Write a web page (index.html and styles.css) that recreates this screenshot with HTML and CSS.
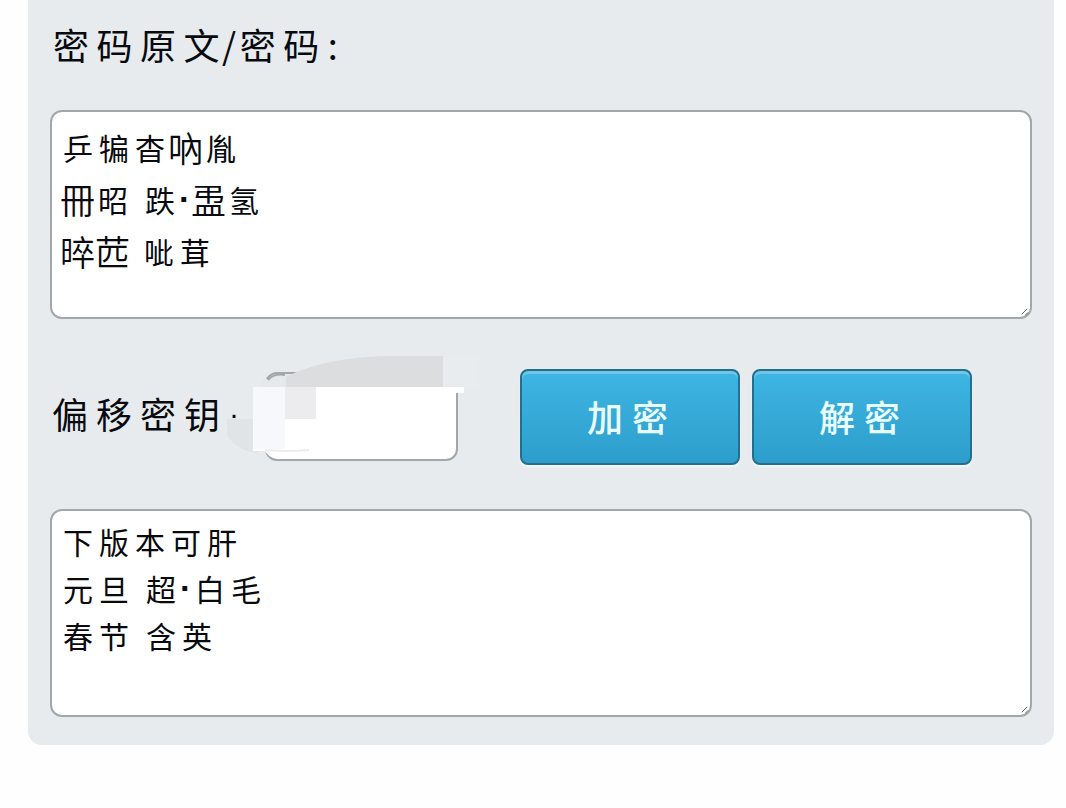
FILE: index.html
```html
<!DOCTYPE html>
<html lang="zh-CN">
<head>
    <meta charset="UTF-8">
    <meta name="viewport" content="width=device-width, initial-scale=1.0">
    <title>密码</title>
    <link rel="stylesheet" href="styles.css">
</head>
<body>
    <div class="panel">
        <div class="title">密码原文<span class="slash">/</span>密码<span class="colon">:</span></div>

        <div class="box source">
            <p><span class="hand">乒犏杳</span><span class="plain">吶</span><span class="hand">胤</span></p>
            <p><span class="plain">冊</span><span class="hand">昭</span><span class="space"></span><span class="hand">跌</span><span class="dot">·</span><span class="plain">盄</span><span class="hand">氢</span></p>
            <p><span class="plain">晬苉</span><span class="space"></span><span class="hand">呲茸</span></p>
            <svg class="grip" viewBox="0 0 10 10"><path d="M2 8L8 2M6 9L9 6"/></svg>
        </div>

        <div class="controls">
            <span class="label">偏移密钥<span class="label-dot">·</span></span>
            <div class="key">
                <div class="key-input"></div>
                <svg class="smudge" viewBox="0 0 260 110">
                    <path d="M2 66H32V100Q12 98 2 82Z" fill="#e0e4e6"/>
                    <path d="M36 26H43Q50 21 66 21V35H36Z" fill="#e5e9eb"/>
                    <path d="M43 27Q49 20 60 22" fill="none" stroke="#a3a7a9" stroke-width="2"/>
                    <path d="M61 24C90 9 130 3 168 3H218V36H61Z" fill="#dcddde"/>
                    <path d="M36 36H60V99H36Z" fill="#e7ebee"/>
                    <path d="M41 100V94H100V104H46Z" fill="#fff"/>
                    <path d="M28 34H239V40H226V42H218V90H100V98H28Z" fill="#fff"/>
                    <path d="M28 34H60V96H28Z" fill="#f7f8fc"/>
                    <path d="M60 34H91V66H60Z" fill="#ececef"/>
                    <path d="M40 97Q62 99 84 97" fill="none" stroke="#ececee" stroke-width="2"/>
                    <path d="M218 4H252V34H218Z" fill="#e9ecee"/>
                </svg>
            </div>
            <div class="buttons">
                <button class="btn">加密</button>
                <button class="btn">解密</button>
            </div>
        </div>

        <div class="box result">
            <p><span class="hand">下版本可肝</span></p>
            <p><span class="hand">元旦</span><span class="space"></span><span class="hand">超</span><span class="dot">·</span><span class="hand">白毛</span></p>
            <p><span class="hand">春节</span><span class="space"></span><span class="hand">含英</span></p>
            <svg class="grip" viewBox="0 0 10 10"><path d="M2 8L8 2M6 9L9 6"/></svg>
        </div>
    </div>
</body>
</html>
```

FILE: styles.css
```css
* {
    box-sizing: border-box;
}
body {
    margin: 0;
    height: 808px;
    overflow: hidden;
    background-color: #fefefe;
    color: #080a0e;
    font-family: "Noto Sans CJK SC", sans-serif;
}
.panel {
    width: 1026px;
    height: 745px;
    margin-left: 28px;
    padding: 15px 22px 28px;
    background-color: #e7ebee;
    border-radius: 0 0 14px 14px;
}
.title {
    height: 95px;
    padding-left: 3px;
    font-size: 36px;
    font-weight: 400;
    line-height: 58px;
    letter-spacing: 7.5px;
    white-space: nowrap;
}
.slash {
    margin-left: -5px;
    margin-right: -4px;
}
.colon {
    margin-left: 1px;
}
.box {
    position: relative;
    width: 982px;
    height: 209px;
    border: 2px solid #a3a7a9;
    border-radius: 12px;
    background-color: #fff;
}
.box p {
    display: flex;
    margin: 0;
    white-space: pre;
}
.source {
    padding: 9px 8px;
}
.source p {
    height: 52px;
    line-height: 52px;
}
.result {
    height: 208px;
    padding: 7px 8px;
}
.result p {
    height: 47px;
    line-height: 47px;
}
.hand {
    margin-left: 3px;
    margin-right: -3px;
    font-size: 30px;
    font-weight: 400;
    letter-spacing: 6px;
}
.plain {
    font-size: 35px;
    font-weight: 350;
}
.space {
    width: 11px;
}
.dot {
    width: 13px;
    font-family: "Liberation Sans", sans-serif;
    font-size: 34px;
    font-weight: 700;
    text-indent: 1px;
}
.grip {
    position: absolute;
    right: 1px;
    bottom: 1px;
    width: 9px;
    height: 9px;
    fill: none;
    stroke: #555;
}
.controls {
    display: flex;
    height: 190px;
    padding-top: 50px;
}
.label {
    width: 215px;
    padding-left: 2px;
    font-size: 36px;
    font-weight: 400;
    line-height: 88px;
    letter-spacing: 8px;
    white-space: nowrap;
}
.label-dot {
    margin-left: 1px;
    font-family: "Liberation Sans", sans-serif;
    font-size: 30px;
    vertical-align: 5px;
    line-height: 1;
}
.key {
    position: relative;
    width: 255px;
}
.key-input {
    width: 193px;
    height: 89px;
    margin-top: 3px;
    border: 2px solid #a3a7a9;
    border-radius: 12px;
    background-color: #fff;
}
/* painted over the key field */
.smudge {
    position: absolute;
    left: -40px;
    top: -16px;
    width: 260px;
    height: 110px;
}
.buttons {
    display: flex;
    gap: 12px;
}
.btn {
    width: 220px;
    height: 96px;
    padding: 0 0 2px;
    border: 2px solid #236f8c;
    border-radius: 8px;
    background: linear-gradient(#3eb5e3, #2d9ecb);
    box-shadow: inset 0 3px 0 rgba(255, 255, 255, 0.25), 0 2px 2px #f4f8fa;
    color: #e9ffff;
    font-family: "Noto Sans CJK SC", sans-serif;
    font-size: 36px;
    font-weight: 500;
    letter-spacing: 9px;
    text-indent: 4px;
}
```
